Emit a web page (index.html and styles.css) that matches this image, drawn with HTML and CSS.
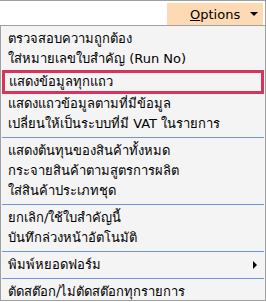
FILE: index.html
```html
<!DOCTYPE html>
<html lang="th">
<head>
<meta charset="UTF-8">
<meta name="viewport" content="width=device-width, initial-scale=1.0">
<title>Options</title>
<link rel="stylesheet" href="styles.css">
</head>
<body>
<div class="bar">
    <div class="options">
        <span class="options-label"><u>O</u>ptions</span>
        <span class="caret"></span>
    </div>
</div>
<div class="menu">
    <div class="item">ตรวจสอบความถูกต้อง</div>
    <div class="item">ใส่หมายเลขใบสำคัญ (Run No)</div>
    <div class="item selected">แสดงข้อมูลทุกแถว</div>
    <div class="item">แสดงแถวข้อมูลตามที่มีข้อมูล</div>
    <div class="item">เปลี่ยนให้เป็นระบบที่มี VAT ในรายการ</div>
    <div class="sep"></div>
    <div class="item">แสดงต้นทุนของสินค้าทั้งหมด</div>
    <div class="item">กระจายสินค้าตามสูตรการผลิต</div>
    <div class="item">ใส่สินค้าประเภทชุด</div>
    <div class="sep"></div>
    <div class="item">ยกเลิก/ใช้ใบสำคัญนี้</div>
    <div class="item">บันทึกล่วงหน้าอัตโนมัติ</div>
    <div class="sep"></div>
    <div class="item submenu">พิมพ์หยอดฟอร์ม<span class="arrow"></span></div>
    <div class="sep"></div>
    <div class="item">ตัดสต๊อก/ไม่ตัดสต๊อกทุกรายการ</div>
</div>
</body>
</html>
```

FILE: styles.css
```css
body {
    margin: 0;
    width: 266px;
    height: 302px;
    font-family: Tahoma, "DejaVu Sans", sans-serif;
    font-size: 13px;
    color: #000;
    background-color: #fff;
}
.bar {
    height: 25px;
    border-top: 1px solid #a0a0a0;
    border-right: 1px solid #a0a0a0;
    display: flex;
    justify-content: flex-end;
    align-items: flex-start;
    box-sizing: border-box;
    padding: 2px 2px 0 0;
}
.options {
    width: 96px;
    height: 22px;
    background-color: #fdd9b4;
    display: flex;
    align-items: center;
    padding-left: 23px;
    box-sizing: border-box;
}
.options-label {
    flex: 1;
}
.options-label u {
    text-decoration-thickness: 1px;
}
.caret {
    width: 0;
    height: 0;
    border-left: 4px solid transparent;
    border-right: 4px solid transparent;
    border-top: 4px solid #000;
    margin-right: 5px;
}
.menu {
    height: 276px;
    box-sizing: border-box;
    border: 1px solid #a0a0a0;
    background-color: #f4f4f4;
    padding-top: 3px;
}
.item {
    height: 20px;
    line-height: 20px;
    padding-left: 7px;
    white-space: nowrap;
    display: flex;
    align-items: center;
}
.selected {
    height: 24px;
    box-sizing: border-box;
    border: 3px solid #d8345b;
    margin: 1px 1px 0 1px;
    padding-left: 4px;
}
.sep {
    height: 7px;
    display: flex;
    align-items: center;
}
.sep::before {
    content: "";
    flex: 1;
    height: 1px;
    background-color: #7094d8;
    margin: 0 1px;
}
.submenu {
    justify-content: space-between;
    padding-right: 8px;
}
.arrow {
    width: 0;
    height: 0;
    border-top: 4px solid transparent;
    border-bottom: 4px solid transparent;
    border-left: 4px solid #000;
}
```
